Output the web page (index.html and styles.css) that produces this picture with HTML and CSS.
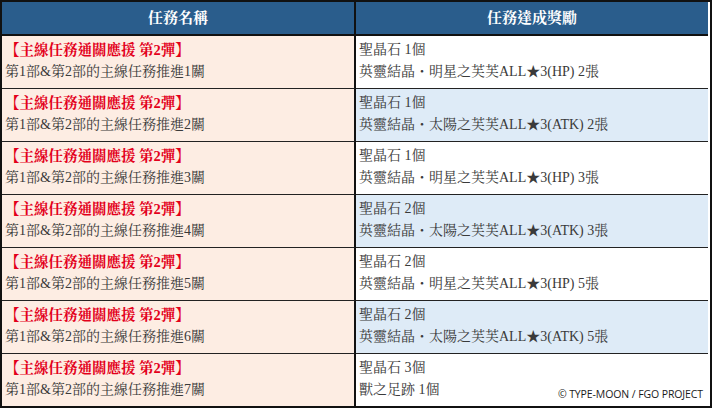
FILE: index.html
```html
<!DOCTYPE html>
<html lang="zh-Hant">
<head>
<meta charset="utf-8">
<link rel="stylesheet" href="styles.css">
</head>
<body>
<div class="page">
  <div class="table">
    <div class="th th-left">任務名稱</div>
    <div class="th th-right">任務達成獎勵</div>

    <div class="cell name"><div class="title">【主線任務通關應援 第2彈】</div><div>第1部&amp;第2部的主線任務推進1關</div></div>
    <div class="cell reward white"><div>聖晶石 1個</div><div>英靈結晶・明星之芙芙ALL★3(HP) 2張</div></div>

    <div class="cell name"><div class="title">【主線任務通關應援 第2彈】</div><div>第1部&amp;第2部的主線任務推進2關</div></div>
    <div class="cell reward blue"><div>聖晶石 1個</div><div>英靈結晶・太陽之芙芙ALL★3(ATK) 2張</div></div>

    <div class="cell name"><div class="title">【主線任務通關應援 第2彈】</div><div>第1部&amp;第2部的主線任務推進3關</div></div>
    <div class="cell reward white"><div>聖晶石 1個</div><div>英靈結晶・明星之芙芙ALL★3(HP) 3張</div></div>

    <div class="cell name"><div class="title">【主線任務通關應援 第2彈】</div><div>第1部&amp;第2部的主線任務推進4關</div></div>
    <div class="cell reward blue"><div>聖晶石 2個</div><div>英靈結晶・太陽之芙芙ALL★3(ATK) 3張</div></div>

    <div class="cell name"><div class="title">【主線任務通關應援 第2彈】</div><div>第1部&amp;第2部的主線任務推進5關</div></div>
    <div class="cell reward white"><div>聖晶石 2個</div><div>英靈結晶・明星之芙芙ALL★3(HP) 5張</div></div>

    <div class="cell name"><div class="title">【主線任務通關應援 第2彈】</div><div>第1部&amp;第2部的主線任務推進6關</div></div>
    <div class="cell reward blue"><div>聖晶石 2個</div><div>英靈結晶・太陽之芙芙ALL★3(ATK) 5張</div></div>

    <div class="cell name last"><div class="title">【主線任務通關應援 第2彈】</div><div>第1部&amp;第2部的主線任務推進7關</div></div>
    <div class="cell reward white last"><div>聖晶石 3個</div><div>獸之足跡 1個</div></div>
  </div>
  <div class="copyright">© TYPE-MOON / FGO PROJECT</div>
</div>
</body>
</html>
```
FILE: styles.css
```css
html, body {
  margin: 0;
  padding: 0;
  background: #ffffff;
}
.page {
  position: relative;
  width: 714px;
  height: 408px;
}
.table {
  width: 712px;
  box-sizing: border-box;
  border: 2px solid #111111;
  display: grid;
  grid-template-columns: 354px 352px;
  column-gap: 0;
  font-family: "Liberation Serif", "Noto Serif CJK TC", "Noto Sans CJK TC", serif;
  font-size: 14px;
  color: #3a3a3a;
}
.th {
  height: 32px;
  box-sizing: border-box;
  padding-top: 5px;
  line-height: 22px;
  background: #2a5d8c;
  color: #ffffff;
  font-weight: bold;
  font-size: 15px;
  text-align: center;
  border-bottom: 2px solid #111111;
  height: 34px;
}
.th-left {
  border-right: 2px solid #111111;
}
.cell {
  height: 53px;
  box-sizing: border-box;
  padding: 3px 0 0 3px;
  line-height: 22px;
  border-bottom: 1px solid #222222;
  white-space: nowrap;
}
.cell.last {
  border-bottom: none;
  height: 52px;
}
.name {
  background: #fdede3;
  border-right: 2px solid #111111;
}
.title {
  color: #e3001b;
  font-weight: bold;
  font-size: 14.5px;
}
.white {
  background: #ffffff;
}
.blue {
  background: #deebf7;
}
.copyright {
  position: absolute;
  right: 11px;
  bottom: 8px;
  font-family: "Open Sans", "Noto Sans", sans-serif;
  font-size: 10.5px;
  line-height: 12px;
  color: #1a1a1a;
  letter-spacing: -0.1px;
}
```
